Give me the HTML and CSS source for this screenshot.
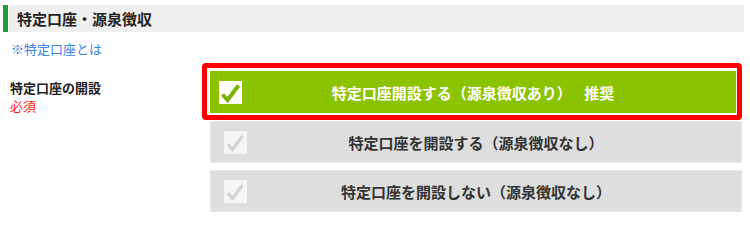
FILE: index.html
```html
<!DOCTYPE html>
<html lang="ja">
<head>
<meta charset="utf-8">
<title>特定口座・源泉徴収</title>
<link rel="stylesheet" href="styles.css">
</head>
<body>
<div class="page">
  <h2 class="title"><span class="title-inner">特定口座・源泉徴収</span></h2>
  <a class="link" href="#">※特定口座とは</a>
  <div class="row">
    <div class="label">
      <div class="label-name">特定口座の開設</div>
      <div class="required">必須</div>
    </div>
    <div class="options">
      <div class="selected-frame">
        <div class="option option-on">
          <span class="check check-on">
            <svg viewBox="0 0 23 23" width="23" height="23"><path d="M3.5 13.5 L8.5 19 L19.5 4.5" fill="none" stroke="#79b400" stroke-width="4" stroke-linejoin="miter" stroke-linecap="butt"/></svg>
          </span>
          <span class="option-text">特定口座開設する（源泉徴収あり）　<span class="recommend">推奨</span></span>
        </div>
      </div>
      <div class="option option-off">
        <span class="check check-off">
          <svg viewBox="0 0 23 23" width="23" height="23"><path d="M4 13 L8.5 18.5 L18.5 5" fill="none" stroke="#d2d2d2" stroke-width="3"/></svg>
        </span>
        <span class="option-text">特定口座を開設する（源泉徴収なし）</span>
      </div>
      <div class="option option-off">
        <span class="check check-off">
          <svg viewBox="0 0 23 23" width="23" height="23"><path d="M4 13 L8.5 18.5 L18.5 5" fill="none" stroke="#d2d2d2" stroke-width="3"/></svg>
        </span>
        <span class="option-text">特定口座を開設しない（源泉徴収なし）</span>
      </div>
    </div>
  </div>
</div>
</body>
</html>
```
FILE: styles.css
```css
* { box-sizing: border-box; }
html, body { margin: 0; padding: 0; background: #fff; }
body {
  font-family: "Noto Sans CJK JP", "Noto Sans", sans-serif;
  color: #222;
}
.page { padding-top: 5px; }

.title {
  margin: 0 6px 0 3px;
  border-left: 5px solid #1f9c3b;
  height: 27px;
  display: flex;
}
.title-inner {
  flex: 1;
  margin-left: 1px;
  background: #efefef;
  padding-left: 8px;
  font-size: 15px;
  font-weight: bold;
  line-height: 27px;
  color: #222;
}

.link {
  display: block;
  margin-top: 8px;
  padding-left: 11px;
  font-size: 13px;
  line-height: 18px;
  color: #3a82df;
  text-decoration: none;
}

.row {
  margin-top: 5px;
  display: grid;
  grid-template-columns: 202px 540px;
}
.label {
  padding: 16px 0 0 10px;
  font-size: 13px;
  line-height: 18px;
}
.label-name { font-weight: bold; color: #222; }
.required { color: #ff1a1a; }

.options { display: flex; flex-direction: column; }

.selected-frame {
  border: 5px solid #ff0000;
  border-radius: 4px;
  background: #fff;
  padding: 3px 1px 2px 3px;
}

.option {
  height: 42px;
  display: grid;
  grid-template-columns: 1fr auto 1fr;
  align-items: center;
  font-size: 15px;
  font-weight: bold;
}
.option-text { grid-column: 2; white-space: nowrap; }
.recommend { padding-left: 5px; }
.check {
  grid-column: 1;
  justify-self: start;
  width: 23px;
  height: 23px;
  display: block;
}
.check svg { display: block; }

.option-on {
  background: #8cc300;
  color: #fff;
}
.check-on {
  background: #fff;
  margin-left: 9px;
}

.option-off {
  margin-left: 8px;
  width: 532px;
  background: #dedede;
  border: 1px solid #e7e7e7;
  color: #333;
}
.option-off + .option-off { margin-top: 7px; }
.selected-frame + .option-off { margin-top: 1px; }
.check-off {
  background: #f5f5f5;
  margin-left: 13px;
}
```
